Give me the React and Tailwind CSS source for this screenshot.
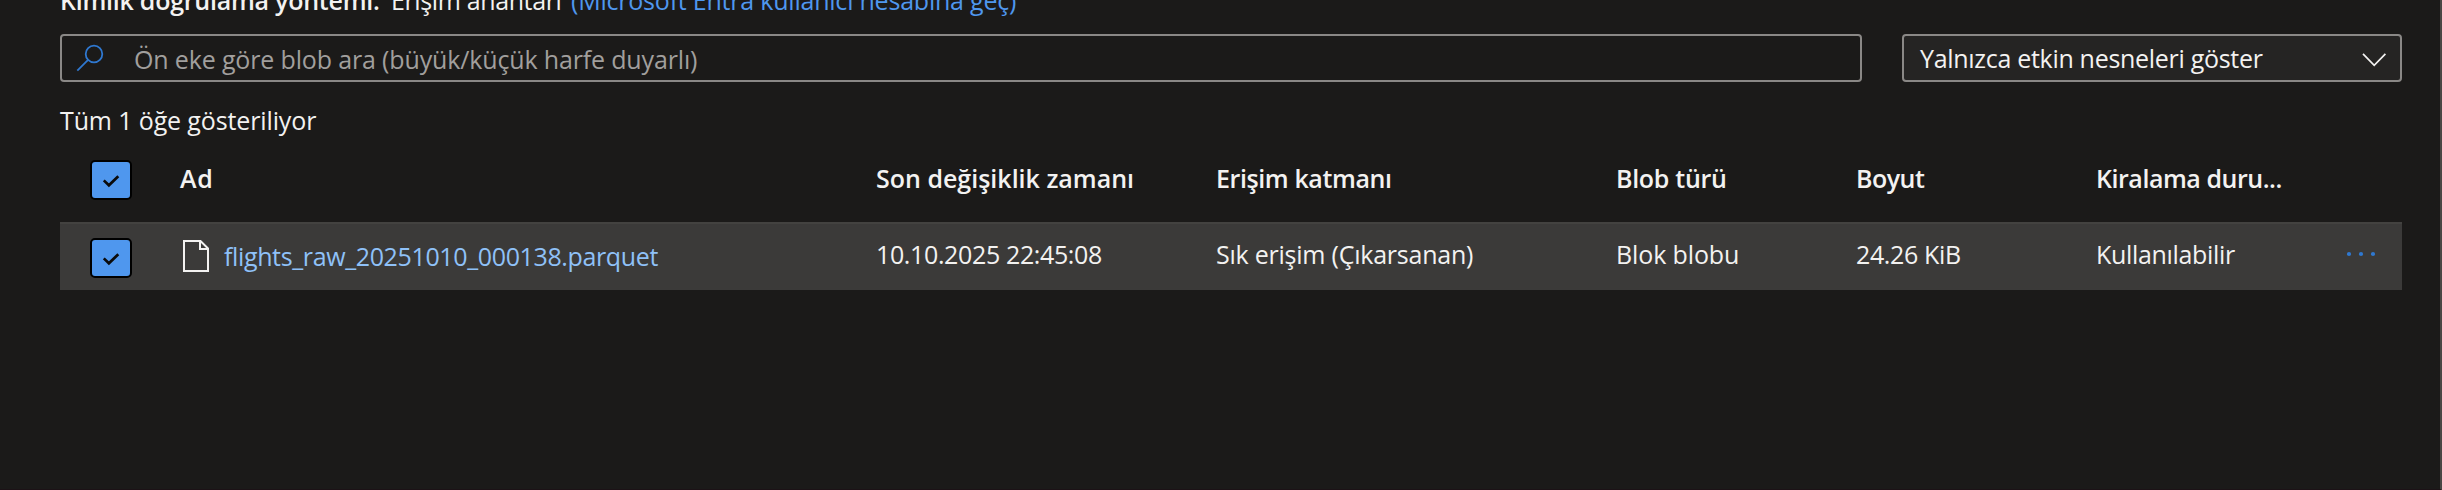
function Checkbox() {
  return (
    <span className="flex h-[40px] w-[42px] shrink-0 items-center justify-center rounded-[5px] border-2 border-black bg-[#4f97ee]">
      <svg width="20" height="16" viewBox="0 0 20 16" fill="none" className="relative left-[-0.5px] top-px">
        <path d="M2.8 7.4 7.9 12.3 17.3 3.2" stroke="#0b0b0b" strokeWidth="2.7" />
      </svg>
    </span>
  );
}

function SearchBox() {
  return (
    <div className="flex h-[48px] w-[1802px] items-start rounded-[4px] border-2 border-[#8a8886] pl-[14px]">
      <svg width="28" height="28" viewBox="0 0 28 28" fill="none" stroke="#2f78d0" strokeWidth="1.8" className="mt-[8px] shrink-0">
        <circle cx="18" cy="10" r="8.3" />
        <path d="M12.1 15.9 1.3 26.6" />
      </svg>
      <span className="ml-[30px] mt-[6px] tracking-[-0.15px] text-[#a19f9d]">
        Ön eke göre blob ara (büyük/küçük harfe duyarlı)
      </span>
    </div>
  );
}

function Select() {
  return (
    <div className="flex h-[48px] w-[500px] items-start justify-between rounded-[4px] border-2 border-[#8a8886] bg-[#252423] pl-[16px] pr-[13px]">
      <span className="mt-[5px] tracking-[-0.3px]">Yalnızca etkin nesneleri göster</span>
      <svg width="26" height="16" viewBox="0 0 26 16" fill="none" stroke="#f3f2f1" strokeWidth="1.7" className="mt-[16px]">
        <path d="M2 1.8 13.2 13.4 24.4 1.8" />
      </svg>
    </div>
  );
}

const columns = 'grid grid-cols-[118px_697px_340px_400px_240px_240px_1fr] items-start';

export default function App() {
  return (
    <div className="flex h-[490px] w-[2442px] flex-col overflow-hidden whitespace-nowrap border-r-2 border-b border-r-[#484644] border-b-[#1c1216] bg-[#1b1a19] pl-[60px] font-['Open_Sans',sans-serif] text-[25px] leading-[34px] text-[#f3f2f1]">
      <div className="-mt-[17px] flex">
        <span className="w-[331px] font-semibold tracking-[-0.243px]">Kimlik doğrulama yöntemi:</span>
        <span className="w-[180px] tracking-[-0.375px]">Erişim anahtarı</span>
        <a className="tracking-[-0.215px] text-[#4f97ee]">(Microsoft Entra kullanıcı hesabına geç)</a>
      </div>

      <div className="mt-[17px] flex gap-[40px]">
        <SearchBox />
        <Select />
      </div>

      <div className="mt-[21px] tracking-[-0.13px]">Tüm 1 öğe gösteriliyor</div>

      <div className={`${columns} h-[85px] w-[2342px] pt-[23px] font-semibold`}>
        <span className="pl-[30px]"><Checkbox /></span>
        <span className="mt-px pl-[2px] tracking-[0.6px]">Ad</span>
        <span className="mt-px pl-[1px]">Son değişiklik zamanı</span>
        <span className="mt-px pl-[1px] tracking-[-0.396px]">Erişim katmanı</span>
        <span className="mt-px pl-[1px] tracking-[-0.291px]">Blob türü</span>
        <span className="mt-px pl-[1px] tracking-[-0.5px]">Boyut</span>
        <span className="mt-px pl-[1px] tracking-[-0.457px]">Kiralama duru...</span>
      </div>

      <div className={`${columns} h-[68px] w-[2342px] border-t-2 border-[#434240] bg-[#3b3a39] pt-[13px]`}>
        <span className="pl-[30px] pt-px"><Checkbox /></span>
        <span className="flex items-start">
          <svg width="26" height="32" viewBox="0 0 26 32" fill="none" stroke="#f3f2f1" strokeWidth="2" className="ml-[5px] mt-[3px]">
            <path d="M1 1H17.5L25 8.5V31H1Z" />
            <path d="M17 1V9H25" />
          </svg>
          <a className="ml-[15px] mt-[2px] tracking-[-0.365px] text-[#8fc1f8]">flights_raw_20251010_000138.parquet</a>
        </span>
        <span className="pl-[1px] tracking-[-0.366px]">10.10.2025 22:45:08</span>
        <span className="pl-[1px] tracking-[-0.232px]">Sık erişim (Çıkarsanan)</span>
        <span className="pl-[1px] tracking-[-0.119px]">Blok blobu</span>
        <span className="pl-[1px] tracking-[-0.357px]">24.26 KiB</span>
        <span className="flex items-start justify-between pl-[1px] pr-[26px]">
          <span className="tracking-[-0.325px]">Kullanılabilir</span>
          <svg width="30" height="6" viewBox="0 0 30 6" fill="#2f78d0" className="mt-[14px]">
            <circle cx="3" cy="3" r="2.1" />
            <circle cx="15" cy="3" r="2.1" />
            <circle cx="27" cy="3" r="2.1" />
          </svg>
        </span>
      </div>
    </div>
  );
}
